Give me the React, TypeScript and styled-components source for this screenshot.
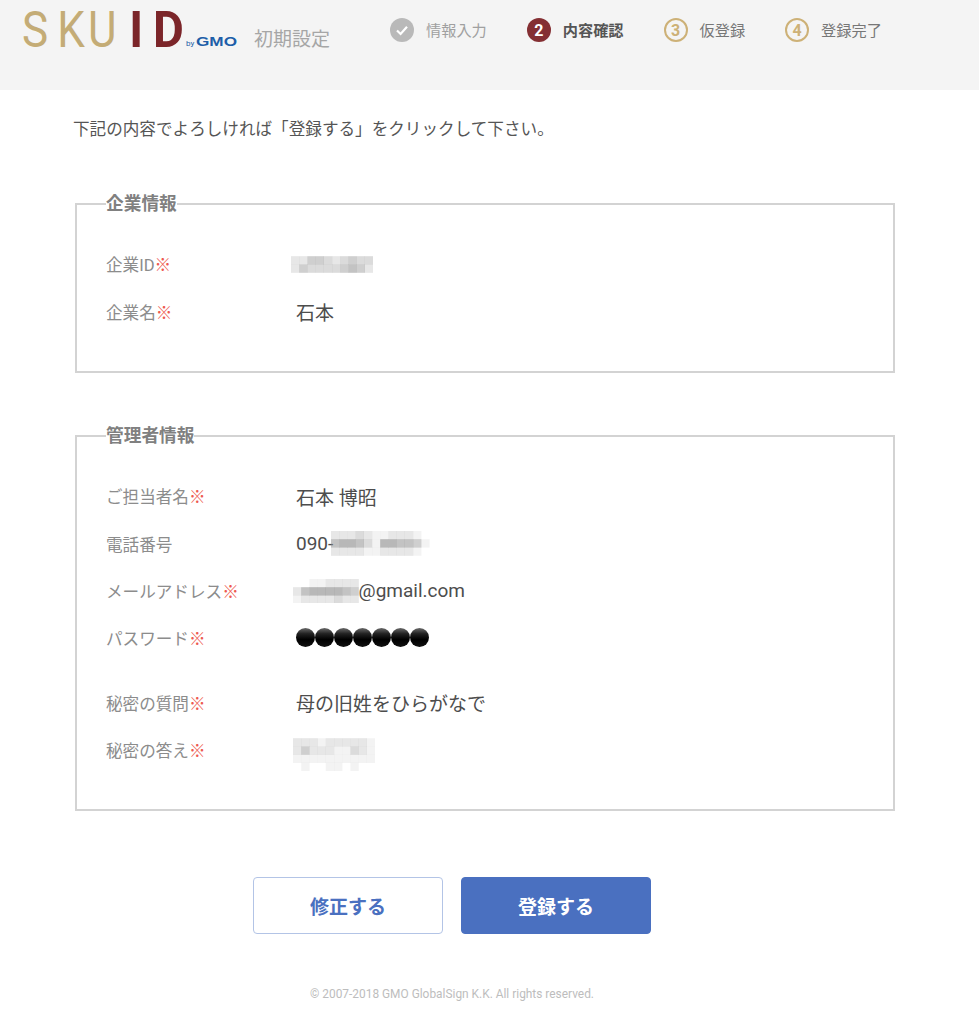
import React from 'react';
import styled, { createGlobalStyle } from 'styled-components';

const GlobalStyle = createGlobalStyle`
  html, body {
    margin: 0;
    padding: 0;
    background: #fff;
    font-family: Roboto, "Noto Sans CJK JP", sans-serif;
  }
`;

const Page = styled.div`
  width: 979px;
  height: 1024px;
  overflow: hidden;
`;

const Header = styled.header`
  display: flex;
  align-items: flex-start;
  height: 90px;
  background: #f4f4f4;
  box-sizing: border-box;
  padding-left: 22px;
`;

const Logo = styled.svg`
  display: block;
  width: 216px;
  height: 60px;
  flex: none;
`;

const HeaderTitle = styled.div`
  margin: 26px 0 0 16px;
  font-size: 19px;
  line-height: 28px;
  color: #a6a6a6;
  white-space: nowrap;
`;

const Steps = styled.ol`
  display: flex;
  gap: 40px;
  list-style: none;
  margin: 18px 0 0 60px;
  padding: 0;
`;

const Step = styled.li`
  display: flex;
  align-items: center;
  gap: 12px;
  height: 24px;
`;

const StepBadge = styled.span<{ $kind: 'done' | 'current' | 'todo' }>`
  display: flex;
  align-items: center;
  justify-content: center;
  box-sizing: border-box;
  width: 24px;
  height: 24px;
  border-radius: 50%;
  font-size: 16px;
  font-weight: 700;
  ${(p) => p.$kind === 'done' && 'background: #b9b9b9; color: #fff;'}
  ${(p) => p.$kind === 'current' && 'background: #842f33; color: #fff;'}
  ${(p) => p.$kind === 'todo' && 'border: 2px solid #cdb177; color: #cdb177;'}
`;

const StepLabel = styled.span<{ $kind: 'done' | 'current' | 'todo' }>`
  margin-top: -2px;
  font-size: 15.2px;
  white-space: nowrap;
  color: ${(p) => (p.$kind === 'done' ? '#a0a0a0' : p.$kind === 'current' ? '#555' : '#777')};
  font-weight: ${(p) => (p.$kind === 'current' ? 700 : 400)};
`;

const Main = styled.main`
  padding: 29px 84px 0 75px;
`;

const Intro = styled.p`
  margin: 0 0 53px -2px;
  font-size: 16.6px;
  line-height: 22px;
  color: #555;
  white-space: nowrap;
`;

const Section = styled.fieldset<{ $height: number }>`
  box-sizing: border-box;
  height: ${(p) => p.$height}px;
  margin: 0 0 ${(p) => (p.$height < 200 ? 53 : 0)}px;
  padding: 26.5px 0 0 29px;
  border: 2px solid #d3d3d3;
  min-width: 0;
`;

const Legend = styled.legend`
  padding: 0;
  font-size: 17.7px;
  line-height: 20px;
  font-weight: 700;
  color: #808080;
`;

const Row = styled.div<{ $gapAfter?: boolean }>`
  display: flex;
  align-items: center;
  height: 47.4px;
  margin-bottom: ${(p) => (p.$gapAfter ? 17 : 0)}px;
`;

const Label = styled.div`
  width: 190px;
  flex: none;
  font-size: 16.6px;
  color: #8c8c8c;
  white-space: nowrap;
`;

const Required = styled.span`
  color: #ee5a50;
`;

const Value = styled.div`
  display: flex;
  align-items: center;
  font-size: 19px;
  color: #4d4d4d;
  white-space: nowrap;
`;

const Mosaic = styled.svg<{ $shift: number }>`
  display: block;
  margin-left: ${(p) => p.$shift}px;
  flex: none;
`;

const Dots = styled.div`
  display: flex;
  margin-top: -2px;
`;

const Dot = styled.span`
  display: block;
  width: 19px;
  height: 19px;
  flex: none;
  border-radius: 50%;
  background: linear-gradient(180deg, #6a6a6a 0%, #222 30%, #000 60%, #111 100%);
`;

const Actions = styled.div`
  display: flex;
  justify-content: center;
  gap: 18px;
  width: 904px;
  margin: 66px 0 0 -75px;
`;

const ActionButton = styled.button<{ $primary?: boolean }>`
  width: 190px;
  height: 57px;
  box-sizing: border-box;
  border-radius: 4px;
  border: 1px solid ${(p) => (p.$primary ? '#4a70c0' : '#b3c4e6')};
  background: ${(p) => (p.$primary ? '#4a70c0' : '#fff')};
  color: ${(p) => (p.$primary ? '#fff' : '#4a70c0')};
  font-family: inherit;
  font-size: 19px;
  font-weight: 700;
`;

const Footer = styled.footer`
  width: 904px;
  margin: 52px 0 0 -75px;
  text-align: center;
  font-size: 11.9px;
  line-height: 16px;
  color: #bdbdbd;
`;

const CELL = 8.2;

// each digit is how dark a block of the pixelated area is
const BlurBlock = ({ rows, shift }: { rows: string[]; shift: number }) => (
  <Mosaic $shift={shift} width={rows[0].length * CELL} height={rows.length * CELL}>
    {rows.map((row, y) =>
      row.split('').map((d, x) => (
        <rect
          key={`${x}-${y}`}
          x={x * CELL}
          y={y * CELL}
          width={CELL + 0.2}
          height={CELL + 0.2}
          fill="#888"
          opacity={Number(d) / 10}
        />
      )),
    )}
  </Mosaic>
);

const Check = () => (
  <svg width="14" height="14" viewBox="0 0 14 14" fill="none">
    <path d="M2 7.5 L5.6 11 L12 3.8" stroke="#fff" strokeWidth="2.2" />
  </svg>
);

const steps: { label: string; kind: 'done' | 'current' | 'todo'; mark: React.ReactNode }[] = [
  { label: '情報入力', kind: 'done', mark: <Check /> },
  { label: '内容確認', kind: 'current', mark: '2' },
  { label: '仮登録', kind: 'todo', mark: '3' },
  { label: '登録完了', kind: 'todo', mark: '4' },
];

const App: React.FunctionComponent = () => (
  <Page>
    <GlobalStyle />
    <Header>
      <Logo viewBox="0 0 216 60">
        <g transform="scale(0.88 1)">
          <text y="47" fontFamily="Roboto" fontWeight="400" fontSize="50" fill="#c4ac76">
            <tspan x="0">S</tspan>
            <tspan x="40">K</tspan>
            <tspan x="75">U</tspan>
          </text>
        </g>
        <g transform="scale(0.95 1)">
          <text y="47" fontFamily="Roboto" fontWeight="700" fontSize="50" fill="#7b2529">
            <tspan x="113">I</tspan>
            <tspan x="138">D</tspan>
          </text>
        </g>
        <text x="164" y="46" fontFamily="Roboto" fontSize="8" fill="#1d5ea8">
          by
        </text>
        <text
          x="174"
          y="46"
          fontFamily="Liberation Sans"
          fontWeight="700"
          fontSize="13"
          textLength="41"
          lengthAdjust="spacingAndGlyphs"
          fill="#1d5ea8"
        >
          GMO
        </text>
      </Logo>
      <HeaderTitle>初期設定</HeaderTitle>
      <Steps>
        {steps.map((s) => (
          <Step key={s.label}>
            <StepBadge $kind={s.kind}>{s.mark}</StepBadge>
            <StepLabel $kind={s.kind}>{s.label}</StepLabel>
          </Step>
        ))}
      </Steps>
    </Header>
    <Main>
      <Intro>下記の内容でよろしければ「登録する」をクリックして下さい。</Intro>
      <Section $height={179}>
        <Legend>企業情報</Legend>
        <Row>
          <Label>
            企業ID<Required>※</Required>
          </Label>
          <Value>
            <BlurBlock
              shift={-5}
              rows={['0000000000', '2244323433', '2433334542', '0000000000']}
            />
          </Value>
        </Row>
        <Row>
          <Label>
            企業名<Required>※</Required>
          </Label>
          <Value>石本</Value>
        </Row>
      </Section>
      <Section $height={385}>
        <Legend>管理者情報</Legend>
        <Row>
          <Label>
            ご担当者名<Required>※</Required>
          </Label>
          <Value>石本 博昭</Value>
        </Row>
        <Row>
          <Label>電話番号</Label>
          <Value>
            090-
            <BlurBlock shift={-2} rows={['222321122210', '566531665541', '222211222210']} />
          </Value>
        </Row>
        <Row>
          <Label>
            メールアドレス<Required>※</Required>
          </Label>
          <Value>
            <BlurBlock shift={-3} rows={['00112222', '25666654', '12222322']} />
            @gmail.com
          </Value>
        </Row>
        <Row $gapAfter>
          <Label>
            パスワード<Required>※</Required>
          </Label>
          <Value>
            <Dots aria-label="パスワード">
              {[0, 1, 2, 3, 4, 5, 6].map((i) => (
                <Dot key={i} />
              ))}
            </Dots>
          </Value>
        </Row>
        <Row>
          <Label>
            秘密の質問<Required>※</Required>
          </Label>
          <Value>母の旧姓をひらがなで</Value>
        </Row>
        <Row>
          <Label>
            秘密の答え<Required>※</Required>
          </Label>
          <Value>
            <BlurBlock
              shift={-3}
              rows={['0000000000', '2221222221', '2422211321', '1111111111', '0100110100']}
            />
          </Value>
        </Row>
      </Section>
      <Actions>
        <ActionButton>修正する</ActionButton>
        <ActionButton $primary>登録する</ActionButton>
      </Actions>
      <Footer>© 2007-2018 GMO GlobalSign K.K. All rights reserved.</Footer>
    </Main>
  </Page>
);

export default App;
